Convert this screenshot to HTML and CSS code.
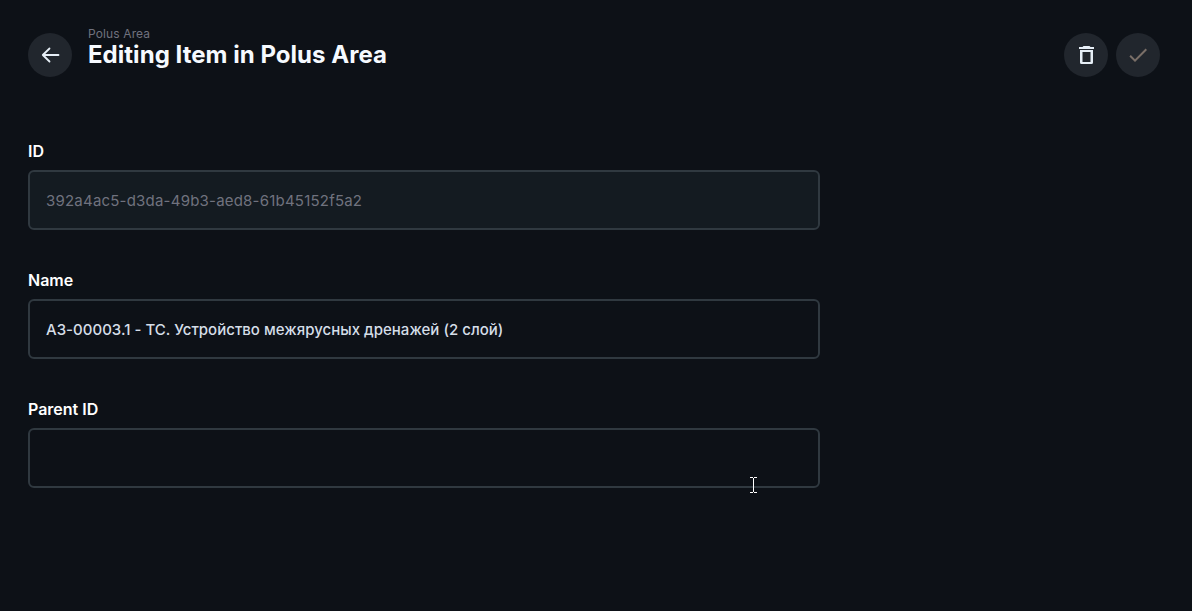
FILE: index.html
```html
<!DOCTYPE html>
<html lang="en">
<head>
<meta charset="utf-8">
<title>Editing Item in Polus Area</title>
<link rel="stylesheet" href="styles.css">
</head>
<body>
<header class="header">
  <button class="round-button" aria-label="Back"><svg class="icon" viewBox="0 0 24 24"><path class="arrow" d="M20.500 12H4.800M11.500 5.500 4.800 12l6.700 6.500"/></svg></button>
  <div class="heading">
    <div class="crumb">Polus Area</div>
    <h1 class="title">Editing Item in Polus Area</h1>
  </div>
  <div class="actions">
    <button class="round-button" aria-label="Delete"><svg class="icon" viewBox="0 0 24 24"><path d="M6 7h13v12.500a1.500 1.500 0 0 1-1.500 1.500h-10A1.500 1.500 0 0 1 6 19.500zM8.500 9v10h8V9zM9.500 3h6l1 1H20v2H5V4h3.500z" fill-rule="evenodd"/></svg></button>
    <button class="round-button round-button-muted" aria-label="Save"><svg class="icon" viewBox="0 0 24 24"><path d="M9 16.170 4.830 12l-1.420 1.410L9 19 21 7l-1.410-1.410z"/></svg></button>
  </div>
</header>
<main class="form">
  <label class="field"><span class="label">ID</span><span class="input input-disabled">392a4ac5-d3da-49b3-aed8-61b45152f5a2</span></label>
  <label class="field"><span class="label">Name</span><span class="input">АЗ-00003.1 - ТС. Устройство межярусных дренажей (2 слой)</span></label>
  <label class="field"><span class="label">Parent ID</span><span class="input"></span></label>
</main>
<svg class="cursor" viewBox="0 0 7 16"><path d="M0 .5h3M4 .5h3M3.500 1v14M0 15.500h3M4 15.500h3"/></svg>
</body>
</html>
```
FILE: styles.css
```css
* { box-sizing: border-box; }
body { margin: 0; height: 611px; overflow: hidden; background: #0d1117; color: #fff; font-family: Inter, sans-serif; }
.header { display: flex; padding: 27px 32px 0 28px; height: 142px; }
.round-button { display: flex; align-items: center; justify-content: center; width: 44px; height: 44px; margin-top: 6px; padding: 0; border: 0; border-radius: 50%; background: #21262d; color: #e6eef6; }
.icon { width: 24px; height: 24px; fill: currentColor; }
.arrow { fill: none; stroke: #e6eef6; stroke-width: 1.8; stroke-linecap: round; stroke-linejoin: round; }
.round-button-muted { color: #7a6f68; }
.heading { margin-left: 16px; }
.crumb { font-size: 12px; line-height: 14px; font-weight: 400; letter-spacing: .12px; color: #70727e; }
.title { margin: 0; font-size: 24px; line-height: 28px; font-weight: 700; letter-spacing: .03px; color: #f6faff; }
.actions { display: flex; gap: 8px; margin-left: auto; }
.form { display: flex; flex-direction: column; gap: 41px; width: 792px; margin-left: 28px; }
.field { display: flex; flex-direction: column; gap: 10px; }
.label { height: 18px; font-size: 16px; line-height: 18px; font-weight: 600; }
.input { display: flex; align-items: center; height: 60px; padding: 0 16px; border: 2px solid #303940; border-radius: 6px; font-size: 15px; font-weight: 500; letter-spacing: .02px; color: #d5dee8; }
.input-disabled { background: #141b21; color: #70727e; font-weight: 400; letter-spacing: .21px; }
.cursor { position: absolute; left: 750px; top: 477px; width: 7px; height: 16px; fill: none; stroke: #fff; stroke-width: 1; }
```
